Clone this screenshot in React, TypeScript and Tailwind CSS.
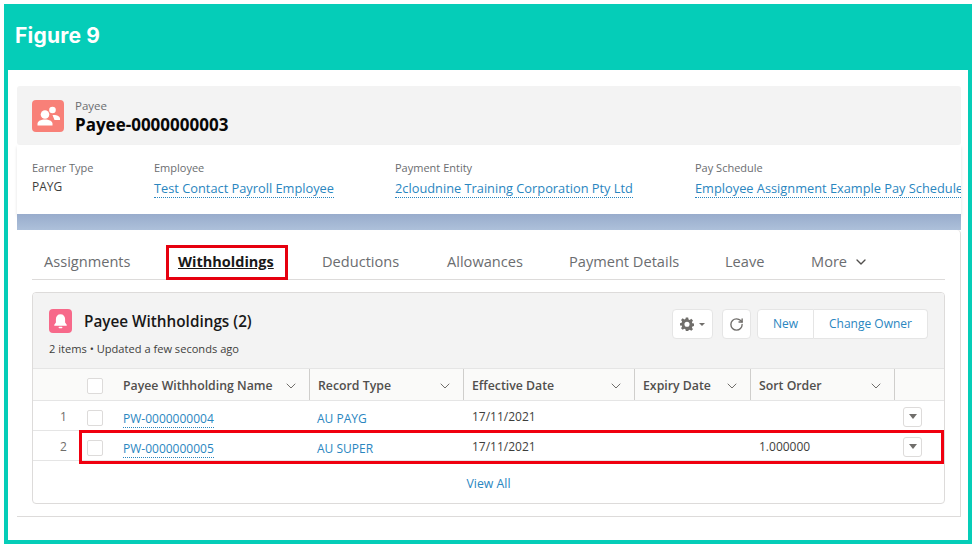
import React from 'react';
import { ChevronDown, RotateCw } from 'lucide-react';

const font = "font-['Open_Sans',sans-serif]";

const tabs = ['Assignments', 'Withholdings', 'Deductions', 'Allowances', 'Payment Details', 'Leave'];

const highlights = [
  { label: 'Earner Type', value: 'PAYG' },
  { label: 'Employee', value: 'Test Contact Payroll Employee', link: true },
  { label: 'Payment Entity', value: '2cloudnine Training Corporation Pty Ltd', link: true },
  { label: 'Pay Schedule', value: 'Employee Assignment Example Pay Schedule', link: true },
];

const columns = ['Payee Withholding Name', 'Record Type', 'Effective Date', 'Expiry Date', 'Sort Order'];

const rows = [
  { n: 1, name: 'PW-0000000004', type: 'AU PAYG', date: '17/11/2021', sort: '' },
  { n: 2, name: 'PW-0000000005', type: 'AU SUPER', date: '17/11/2021', sort: '1.000000' },
];

const grid = 'grid grid-cols-[47px_35px_195px_154px_171px_116px_144px_49px]';

function Checkbox() {
  return <span className="block w-[16px] h-[16px] bg-white border border-[#dddbda] rounded-[2px]" />;
}

function PayeeIcon() {
  return (
    <svg viewBox="0 0 32 32" className="w-[32px] h-[32px] rounded-[4px] bg-[#f88078] shrink-0">
      <g fill="#fff">
        <circle cx="20.500" cy="10" r="3.300" />
        <path d="M20.500 15c3.500-.5 7.500 1 7.500 3.500V20h-5.500c-.5-1.800-1.500-3.500-2-5z" />
        <circle cx="13" cy="14.500" r="4.300" />
        <path d="M5.500 25.500v-1.800c0-2.600 3.500-4.200 7.500-4.200s7.500 1.600 7.500 4.200v1.800z" />
      </g>
    </svg>
  );
}

function BellIcon() {
  return (
    <svg viewBox="0 0 24 24" className="w-[23px] h-[24px] rounded-[4px] bg-[#f7698a] shrink-0">
      <path fill="#fff" d="M12 5c-3 0-4.800 2.200-4.800 5v3.500L5.500 16v1h13v-1l-1.700-2.500V10c0-2.800-1.800-5-4.800-5z" />
      <rect x="10" y="18" width="4" height="1.600" rx=".8" fill="#fff" />
    </svg>
  );
}

function GearIcon() {
  return (
    <svg viewBox="0 0 24 24" className="w-[14px] h-[14px]">
      <path
        fill="#706e6b"
        fillRule="evenodd"
        d="M10 1h4l.7 3.200 1.900.8 2.800-1.800 2.800 2.800-1.800 2.800.8 1.900 3 .7v4l-3 .7-.8 1.900 1.800 2.800-2.800 2.800-2.800-1.800-1.900.8L14 24h-4l-.7-3.100-1.900-.8-2.800 1.800-2.800-2.800 1.800-2.800-.8-1.900L0 14.500v-4l2.800-.7.8-1.900-1.800-2.800 2.800-2.800 2.800 1.800 1.900-.8zM12 8a4.400 4.400 0 1 0 0 8.800A4.400 4.400 0 0 0 12 8z"
      />
    </svg>
  );
}

function RowMenu() {
  return (
    <span className="flex items-center justify-center w-[19px] h-[20px] bg-white border border-[#dddbda] rounded-[3px]">
      <span className="w-0 h-0 border-x-[4px] border-x-transparent border-t-[5px] border-t-[#706e6b]" />
    </span>
  );
}

export default function App() {
  return (
    <div className={`${font} relative w-[976px] h-[546px] bg-white pt-1 px-1 pb-[2px] overflow-hidden`}>
      <div className="flex flex-col h-full border-x-4 border-b-4 border-[#05cdb8]">
        <div className="flex items-center h-[66px] -mx-1 px-[11px] pb-[2px] bg-[#05cdb8] shrink-0">
          <h1 className="font-['Inter',sans-serif] text-[21px] tracking-[0.2px] font-bold text-white">Figure 9</h1>
        </div>

        <div className="pl-[9px] pr-[7px] pt-4">
          <div className="flex items-center gap-[11px] h-[59px] pl-[15px] bg-[#f3f3f3] rounded-[3px]">
            <PayeeIcon />
            <div className="pt-[2px]">
              <div className="text-[11.500px] leading-[14px] text-[#6b6d70]">Payee</div>
              <div className="mt-[2px] text-[17px] leading-[20px] font-bold text-[#080707]">Payee-0000000003</div>
            </div>
          </div>

          <div className="grid grid-cols-[122px_241px_300px_1fr] h-[69px] pl-[15px] pt-[16px] overflow-hidden shadow-[0_2px_3px_rgba(0,0,0,0.12)]">
            {highlights.map((h) => (
              <div key={h.label} className="whitespace-nowrap">
                <div className="text-[11px] leading-[14px] text-[#6b6d70]">{h.label}</div>
                {h.link ? (
                  <span className="inline-block mt-[4px] text-[12.800px] leading-[18px] text-[#2a86bf] border-b border-dotted border-[#2a86bf]">
                    {h.value}
                  </span>
                ) : (
                  <div className="mt-[3px] text-[12px] leading-[18px] text-[#3e3e3c]">{h.value}</div>
                )}
              </div>
            ))}
          </div>

          <div className="h-4 bg-linear-to-b from-[#98accc] to-[#adc0da]" />

          <div className="h-[287px] px-[15px] bg-white border-r border-b border-[#dddbda] rounded-tr-[4px]">
            <div className="grid grid-cols-[134px_144px_125px_122px_156px_86px_1fr] items-center h-[50px] pl-3 pt-[14px] border-b border-[#dddbda]">
              {tabs.map((t) => (
                <span
                  key={t}
                  className={
                    t === 'Withholdings'
                      ? 'text-[14.500px] font-bold text-[#181818] underline'
                      : 'text-[14.600px] text-[#6b6d70]'
                  }
                >
                  {t}
                </span>
              ))}
              <span className="flex items-center gap-[6px] pt-[1px] text-[14.600px] text-[#6b6d70]">
                More <ChevronDown size={16} strokeWidth={2} className="text-[#514f4d]" />
              </span>
            </div>

            <div className="mt-3 h-[212px] border border-[#dddbda] rounded-[4px] overflow-hidden">
              <div className="flex justify-between h-[75px] px-4 pt-4 bg-[#f3f3f3]">
                <div>
                  <div className="flex items-center gap-3">
                    <BellIcon />
                    <span className="text-[15.300px] font-semibold text-[#181818]">Payee Withholdings (2)</span>
                  </div>
                  <div className="mt-[9px] text-[11.100px] leading-[14px] text-[#3e3e3c]">
                    2 items • Updated a few seconds ago
                  </div>
                </div>
                <div className="flex items-start h-[30px] text-[12px] text-[#2a86bf]">
                  <span className="flex items-center justify-center gap-[5px] w-[41px] h-[30px] bg-white border border-[#e5e5e5] rounded-[4px]">
                    <GearIcon />
                    <span className="w-0 h-0 border-x-[3px] border-x-transparent border-t-[3px] border-t-[#706e6b]" />
                  </span>
                  <span className="flex items-center justify-center w-[29px] h-[30px] ml-[9px] mr-[6px] bg-white border border-[#e5e5e5] rounded-[4px]">
                    <RotateCw size={15} strokeWidth={2.200} className="text-[#706e6b]" />
                  </span>
                  <span className="flex items-center justify-center w-[57px] h-[30px] bg-white border border-[#e5e5e5] rounded-l-[4px]">
                    New
                  </span>
                  <span className="flex items-center justify-center w-[114px] h-[30px] bg-white border border-l-0 border-[#e5e5e5] rounded-r-[4px]">
                    Change Owner
                  </span>
                </div>
              </div>

              <div className={`${grid} h-[33px] items-center bg-[#fafaf9] border-y border-[#e5e5e5]`}>
                <span />
                <span className="flex justify-center pr-[5px] mt-[3px]">
                  <Checkbox />
                </span>
                {columns.map((c) => (
                  <span
                    key={c}
                    className="flex items-center justify-between h-full pl-2 pr-[10px] pt-[3px] border-r border-[#cfcecc] text-[12.300px] font-semibold text-[#514f4d] whitespace-nowrap"
                  >
                    {c}
                    <ChevronDown size={16} strokeWidth={1.500} className="text-[#706e6b]" />
                  </span>
                ))}
                <span />
              </div>

              {rows.map((r) => (
                <div key={r.n} className={`${grid} h-[30px] items-center border-b border-[#e5e5e5] text-[12px]`}>
                  <span className="text-center pl-[14px] mt-[2px] text-[#706e6b]">{r.n}</span>
                  <span className="flex justify-center pr-[5px] mt-[4px]">
                    <Checkbox />
                  </span>
                  <span className="pl-2 mt-[6px]">
                    <span className="text-[#2a86bf] border-b border-dotted border-[#2a86bf]">{r.name}</span>
                  </span>
                  <span className="pl-[7px] mt-[6px] text-[#2a86bf]">{r.type}</span>
                  <span className="pl-2 mt-[2px] text-[#3e3e3c]">{r.date}</span>
                  <span />
                  <span className="pl-2 mt-[2px] text-[#3e3e3c]">{r.sort}</span>
                  <span className="flex justify-end pr-[22px] mt-[2px]">
                    <RowMenu />
                  </span>
                </div>
              ))}

              <div className="flex items-center justify-center h-[42px] pt-[4px] text-[12.300px] text-[#2a86bf]">View All</div>
            </div>
          </div>
        </div>
      </div>

      {/* red callouts drawn over the screenshot */}
      <div className="absolute left-[166px] top-[245px] w-[122px] h-[35px] border-[3px] border-[#e6000f]" />
      <div className="absolute left-[79px] top-[430px] w-[865px] h-[34px] border-[3px] border-[#f0000f]" />
    </div>
  );
}
